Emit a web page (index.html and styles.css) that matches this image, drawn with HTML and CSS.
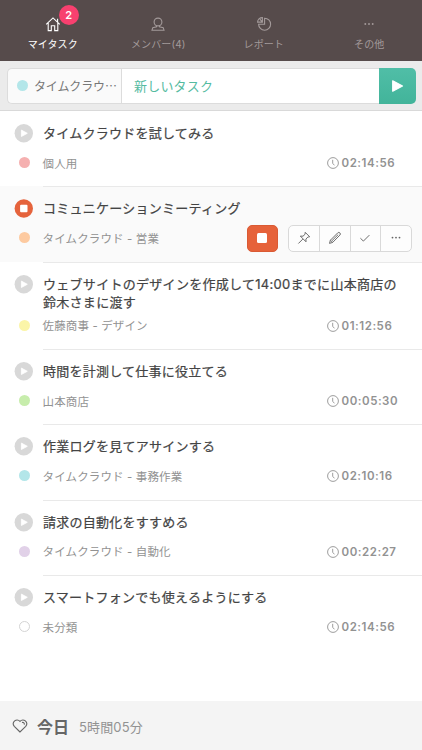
FILE: index.html
```html
<!DOCTYPE html>
<html lang="ja">
<head>
<meta charset="utf-8">
<meta name="viewport" content="width=device-width, initial-scale=1">
<title>マイタスク</title>
<link rel="stylesheet" href="styles.css">
</head>
<body>
<svg class="defs" aria-hidden="true">
  <symbol id="play" viewBox="0 0 20 20"><circle cx="9.8" cy="10.3" r="9.2" fill="#d8d8d8"/><path d="M7.4 7.1v6.4l5.9-3.2z" fill="#fff" stroke="#fff" stroke-width=".8" stroke-linejoin="round"/></symbol>
  <symbol id="stop" viewBox="0 0 20 20"><circle cx="9.8" cy="10.5" r="9.2" fill="#e5633c"/><rect x="6.1" y="6.8" width="7.4" height="7.4" rx="1" fill="#fff"/></symbol>
  <symbol id="clock" viewBox="0 0 12 12"><circle cx="6" cy="6" r="5.4"/><path d="M5.7 2.8v3.5l1.7 2"/></symbol>
</svg>
<div class="app">
  <nav class="tabs">
    <a class="tab active">
      <span class="tab-icon"><svg width="16" height="16" viewBox="0 0 16 16"><path d="M1.2 8.4 8 1.9l6.8 6.5M3.2 7v7.6h3.1V9.8h3.4v4.8h3.1V7M12.6 6V2.8"/></svg><b class="badge">2</b></span>
      <span>マイタスク</span>
    </a>
    <a class="tab">
      <span class="tab-icon"><svg width="16" height="16" viewBox="0 0 16 16"><circle cx="8" cy="6" r="3.9"/><path d="M6.5 9.5v1.4L2.8 11.7 2 14.2h12l-.8-2.5-3.7-.8V9.5"/></svg></span>
      <span>メンバー(4)</span>
    </a>
    <a class="tab">
      <span class="tab-icon"><svg width="16" height="16" viewBox="0 0 16 16"><path d="M8.6 2.2v6H2.6a6 6 0 1 0 6-6zM6.4 1.6v4.5H1.6c0-2.6 2.1-4.5 4.8-4.5zM3.9 3.2l2.5 2.9"/></svg></span>
      <span>レポート</span>
    </a>
    <a class="tab">
      <span class="tab-icon"><svg class="dots" width="16" height="16" viewBox="0 0 16 16"><circle cx="4.3" cy="8" r=".95"/><circle cx="8" cy="8" r=".95"/><circle cx="11.7" cy="8" r=".95"/></svg></span>
      <span>その他</span>
    </a>
  </nav>

  <div class="entry">
    <div class="project"><i class="dot cyan"></i><span>タイムクラウ<span class="more">…</span></span></div>
    <div class="field">新しいタスク</div>
    <div class="start"><svg width="14" height="14" viewBox="0 0 14 14"><path d="M1.7 1.8v10.4L11.5 7z" fill="#fff" stroke="#fff" stroke-width="1.2" stroke-linejoin="round"/></svg></div>
  </div>

  <main class="tasks">
    <section class="task">
      <svg class="state"><use href="#play"/></svg>
      <h2>タイムクラウドを試してみる</h2>
      <i class="dot red"></i>
      <div class="meta"><span>個人用</span><time><svg class="clock"><use href="#clock"/></svg>02:14:56</time></div>
    </section>
    <section class="task running">
      <svg class="state"><use href="#stop"/></svg>
      <h2>コミュニケーションミーティング</h2>
      <i class="dot orange"></i>
      <div class="meta"><span>タイムクラウド - 営業</span>
        <div class="actions">
          <span class="stop"></span>
          <div class="tools">
            <span><svg width="14" height="14" viewBox="0 0 14 14"><path d="m8.2 1.3 4.5 4.5-1.8.2-2 2.1.1 2.7-5.7-5.7 2.7.1 2.1-2zM5.8 8.1 1.4 12.5"/></svg></span>
            <span><svg width="14" height="14" viewBox="0 0 14 14"><path d="m1.5 12.4.9-3.2 7.3-7.3a1.55 1.55 0 0 1 2.2 2.2l-7.2 7.3zM2.4 9.2l2.3 2.2M4 9.7l6.2-6.1"/></svg></span>
            <span><svg width="14" height="14" viewBox="0 0 14 14"><path d="m2.4 7.2 3 2.9 6-6"/></svg></span>
            <span><svg class="dots" width="14" height="14" viewBox="0 0 14 14"><circle cx="3.5" cy="6.6" r=".9"/><circle cx="7" cy="6.6" r=".9"/><circle cx="10.5" cy="6.6" r=".9"/></svg></span>
          </div>
        </div>
      </div>
    </section>
    <section class="task tall">
      <svg class="state"><use href="#play"/></svg>
      <h2>ウェブサイトのデザインを作成して14:00までに山本商店の<br>鈴木さまに渡す</h2>
      <i class="dot yellow"></i>
      <div class="meta"><span>佐藤商事 - デザイン</span><time><svg class="clock"><use href="#clock"/></svg>01:12:56</time></div>
    </section>
    <section class="task">
      <svg class="state"><use href="#play"/></svg>
      <h2>時間を計測して仕事に役立てる</h2>
      <i class="dot green"></i>
      <div class="meta"><span>山本商店</span><time><svg class="clock"><use href="#clock"/></svg>00:05:30</time></div>
    </section>
    <section class="task">
      <svg class="state"><use href="#play"/></svg>
      <h2>作業ログを見てアサインする</h2>
      <i class="dot cyan"></i>
      <div class="meta"><span>タイムクラウド - 事務作業</span><time><svg class="clock"><use href="#clock"/></svg>02:10:16</time></div>
    </section>
    <section class="task">
      <svg class="state"><use href="#play"/></svg>
      <h2>請求の自動化をすすめる</h2>
      <i class="dot purple"></i>
      <div class="meta"><span>タイムクラウド - 自動化</span><time><svg class="clock"><use href="#clock"/></svg>00:22:27</time></div>
    </section>
    <section class="task last">
      <svg class="state"><use href="#play"/></svg>
      <h2>スマートフォンでも使えるようにする</h2>
      <i class="dot empty"></i>
      <div class="meta"><span>未分類</span><time><svg class="clock"><use href="#clock"/></svg>02:14:56</time></div>
    </section>
  </main>

  <footer class="today">
    <svg width="16" height="16" viewBox="0 0 16 16"><path d="M8 14 2.3 8.3C-.9 4.6 4.6-.6 8 3.4c3.4-4 8.9 1.2 5.7 4.9zM10 4.5c1.5-.5 2.7.7 2.2 2.2"/></svg>
    <strong>今日</strong><span>5時間05分</span>
  </footer>
</div>
</body>
</html>
```
FILE: styles.css
```css
* { box-sizing: border-box; }
body {
  margin: 0;
  background: #fff;
  font-family: Inter, "Noto Sans CJK JP", sans-serif;
  color: #444;
}
svg { display: block; flex: none; }
.defs { position: absolute; width: 0; height: 0; }
.app { width: 422px; height: 750px; display: flex; flex-direction: column; overflow: hidden; }

.tabs {
  height: 61px;
  flex: none;
  display: grid;
  grid-template-columns: repeat(4, 1fr);
  background: #564b4b;
}
.tab {
  display: flex;
  flex-direction: column;
  align-items: center;
  padding-top: 16px;
  font-size: 10px;
  line-height: 16px;
  letter-spacing: .1px;
  color: #a39a9a;
}
.tab.active { color: #fff; }
.tab-icon { position: relative; margin-bottom: 4px; }
.tab-icon svg { fill: none; stroke: currentColor; stroke-width: 1.1; }
.tab-icon .dots, .tools .dots { fill: currentColor; stroke: none; }
.badge {
  position: absolute;
  left: 14px;
  top: -11px;
  width: 20px;
  height: 20px;
  border-radius: 50%;
  background: #f8406f;
  color: #fff;
  font-size: 11px;
  font-weight: 600;
  line-height: 20px;
  text-align: center;
}

.entry {
  height: 50px;
  flex: none;
  display: flex;
  padding: 7px 6px 6px 7px;
  background: #ebebeb;
  border-bottom: 1px solid #d9d9d9;
}
.project, .field { display: flex; align-items: center; border: 1px solid #dcdcdc; padding-bottom: 2px; }
.project {
  width: 114px;
  padding-left: 9px;
  gap: 6px;
  background: #fafafa;
  border-right: 0;
  border-radius: 5px 0 0 5px;
  font-size: 12px;
  letter-spacing: -.15px;
  white-space: nowrap;
  color: #777;
}
.project .dot { margin-left: -.5px; margin-right: .5px; }
.more { font-family: "Noto Sans CJK JP", sans-serif; }
.field { flex: 1; padding-left: 12px; background: #fff; border-right: 0; font-size: 13px; letter-spacing: .2px; color: #55bba1; }
.start {
  width: 37px;
  display: flex;
  align-items: center;
  justify-content: center;
  background: linear-gradient(#50bea7, #42b49a);
  border-radius: 0 5px 5px 0;
}

.dot { width: 11px; height: 11px; border-radius: 50%; flex: none; }
.cyan { background: #b3e6e9; }
.red { background: #f5b0b0; }
.orange { background: #fdcaa0; }
.yellow { background: #fbf5a8; }
.green { background: #c7edac; }
.purple { background: #e1d1e8; }
.empty { border: 1px solid #d4d4d4; }

.tasks { flex: 1; min-height: 0; }
.task {
  position: relative;
  height: 75.4px;
  display: grid;
  grid-template-columns: 20px 1fr;
  grid-template-rows: 18px 26px;
  column-gap: 9px;
  row-gap: 8px;
  padding: 13px 10px 0 14px;
  align-items: center;
  justify-items: center;
}
.task > .dot { margin-top: -1px; }
.task.tall { height: 87.3px; grid-template-rows: 36px 26px; row-gap: 2px; }
.task.tall h2 { letter-spacing: .29px; }
.task::after {
  content: "";
  position: absolute;
  z-index: 1;
  left: 43px;
  right: 0;
  bottom: -1px;
  height: 1px;
  background: #e9e9e9;
}
.task.last::after { display: none; }
.running { background: #fafafa; }
.state { width: 20px; height: 20px; align-self: start; margin-top: -1px; }
h2 {
  justify-self: start;
  margin: 0;
  font-size: 13px;
  font-weight: 400;
  line-height: 18px;
  letter-spacing: .25px;
  white-space: nowrap;
  -webkit-text-stroke: .22px #444;
}
.meta {
  width: 100%;
  display: flex;
  align-items: center;
  justify-content: space-between;
  margin-left: -1px;
  font-size: 11.5px;
  letter-spacing: .13px;
  color: #929292;
}
.meta > span { margin-top: -1px; }
time {
  width: 85px;
  display: flex;
  align-items: center;
  gap: 3px;
  font-size: 11.5px;
  font-weight: 600;
  letter-spacing: .55px;
}
.clock { width: 12px; height: 12px; fill: none; stroke: #929292; stroke-width: .9; }
.actions { display: flex; gap: 10px; }
.stop {
  width: 31px;
  height: 27px;
  display: flex;
  align-items: center;
  justify-content: center;
  background: #e6623a;
  border: 1px solid #da5a34;
  border-radius: 5px;
}
.stop::before { content: ""; width: 10px; height: 10px; border-radius: 1.5px; background: #fff; }
.tools {
  width: 124px;
  height: 27px;
  display: grid;
  grid-template-columns: repeat(4, 1fr);
  background: #fdfdfd;
  border: 1px solid #d9d9d9;
  border-radius: 5px;
  color: #666;
}
.tools span { display: flex; align-items: center; justify-content: center; }
.tools span + span { border-left: 1px solid #d9d9d9; }
.tools svg { fill: none; stroke: currentColor; stroke-width: .95; stroke-linejoin: round; }

.today {
  height: 49px;
  flex: none;
  display: flex;
  align-items: center;
  padding: 1px 12px 0;
  background: #f4f4f4;
  color: #666;
}
.today svg { fill: none; stroke: #666; stroke-width: 1.1; }
.today strong { margin-left: 9px; font-size: 16px; }
.today span { margin-left: 10px; font-size: 13px; letter-spacing: .15px; color: #929292; }
```
